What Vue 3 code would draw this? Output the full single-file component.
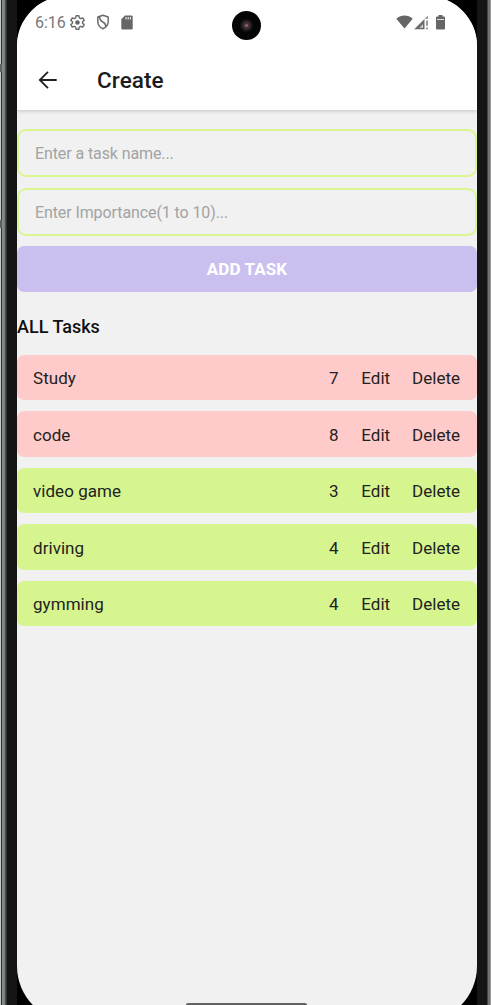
<script setup>
const tasks = [
  { name: 'Study', importance: 7 },
  { name: 'code', importance: 8 },
  { name: 'video game', importance: 3 },
  { name: 'driving', importance: 4 },
  { name: 'gymming', importance: 4 },
]
</script>

<template>
  <div class="phone">
    <i class="side-key upper"></i>
    <i class="side-key lower"></i>
    <div class="glass">
      <main class="screen">
        <header class="top">
          <div class="status">
            <span class="clock">6:16</span>
            <svg class="gear" viewBox="0 0 24 24" width="17" height="17"><path fill="none" stroke="#6b6b6b" stroke-width="2" stroke-linejoin="round" d="M10 2.5h4l.6 3 1.9 1.1 2.9-1 2 3.4-2.3 2v2l2.3 2-2 3.4-2.9-1-1.9 1.1-.6 3h-4l-.6-3-1.9-1.1-2.9 1-2-3.4 2.3-2v-2l-2.3-2 2-3.4 2.9 1 1.9-1.1z"/><circle cx="12" cy="12" r="3.2" fill="#666"/></svg>
            <svg class="shield" viewBox="0 0 14 16" width="14" height="16"><path fill="none" stroke="#6b6b6b" stroke-width="1.5" stroke-linejoin="round" d="M7 1.2 12.2 3v4.5c0 3.500-2.200 6-5.200 7.300-3-1.300-5.200-3.800-5.200-7.300V3zM3.800 2.500c-.5 3 .7 4.200 3 5.500 2.500 1.400 3.400 2.600 2.700 5"/></svg>
            <svg class="card" viewBox="0 0 12 15" width="12" height="15"><path fill="#666" d="M4 .5h6.500q1.200 0 1.200 1.200v11.600q0 1.200-1.200 1.200h-9q-1.200 0-1.200-1.200V4.300z"/><path stroke="#fff" stroke-width="1" d="M5 2v2.500M7.200 2v2.500M9.400 2v2.500"/></svg>
            <span class="spacer"></span>
            <svg class="wifi" viewBox="0 0 17 14" width="17" height="14"><path fill="#666" d="M.3 3.700C5-.5 12-.5 16.700 3.700L8.500 13.600z"/></svg>
            <svg class="signal" viewBox="0 0 15 15" width="15" height="15"><path fill="#6b6b6b" d="M.2 14.300 10.500 4v10.300z"/><path fill="#999" d="m11 3.500 3-3V4h-3z"/><path fill="#d8d8d8" d="M5.500 12.800 9 9.300v3.500z"/><path stroke="#777" stroke-width="1.500" d="M13 5.500v5.200M13 12.500v1.800"/></svg>
            <svg class="battery" viewBox="0 0 9 15" width="9" height="15"><path fill="#666" d="M2.500 0h4v1.500H8q1 0 1 1v11q0 1-1 1H1q-1 0-1-1v-11q0-1 1-1h1.500z"/><path stroke="#ddd" d="M1 4.500h7"/></svg>
            <i class="camera"></i>
          </div>
          <div class="bar">
            <svg viewBox="0 0 20 20" width="20" height="20"><path fill="none" stroke="#202124" stroke-width="1.8" d="M18.700 10H2M10 1.800 1.800 10l8.200 8.200"/></svg>
            <h1>Create</h1>
          </div>
        </header>
        <section class="content">
          <input type="text" placeholder="Enter a task name..." />
          <input type="text" placeholder="Enter Importance(1 to 10)..." />
          <button>ADD TASK</button>
          <h2>ALL Tasks</h2>
          <ul>
            <li v-for="task in tasks" :key="task.name" :class="{ important: task.importance > 5 }">
              <span class="name">{{ task.name }}</span>
              <span class="level">{{ task.importance }}</span>
              <span class="edit">Edit</span>
              <span class="delete">Delete</span>
            </li>
          </ul>
        </section>
      </main>
      <i class="home"></i>
    </div>
  </div>
</template>

<style>
body { overflow: hidden; }
</style>
<style scoped>
* { box-sizing: border-box; }
.phone {
  position: relative;
  height: 1005px;
  overflow: hidden;
  padding: 0 14px 0 17px;
  font-family: Roboto, "Liberation Sans", sans-serif;
  background: linear-gradient(90deg, #c9cbcb 0 1px, #303232 1px 2px, #858989 2px 4px, #777b7b 4px 5px, #4b4e4e 5px 6px, #343636 6px 7px, #151515 7px 487px, #454343 487px 488px, #747070 488px 490px, #999696 490px 491px);
}
.side-key { position: absolute; left: 0; width: 2px; height: 8px; background: #606363; }
.upper { top: 64px; }
.lower { top: 220px; }
.glass { position: relative; height: 1005px; background: linear-gradient(#000 60px, #151515 60px 950px, #000 950px); overflow: hidden; }
.screen { margin-top: -4px; height: 1026px; border-radius: 50px 50px 56px 56px; background: #f1f1f1; overflow: hidden; }
.top { height: 114px; padding-top: 4px; background: #fff; box-shadow: 0 1px 4px #0003; position: relative; }
.status { position: relative; height: 44px; display: flex; align-items: center; padding: 0 32px 0 18px; }
.clock { width: 34px; font-size: 16px; color: #777; }
.shield { margin-left: 9.5px; }
.card { margin-left: 11px; }
.spacer { flex: 1; }
.signal { margin-left: 1px; }
.battery { margin-left: 7px; }
.camera { position: absolute; left: 215px; top: 11px; width: 29px; height: 29px; border-radius: 50%; background: radial-gradient(circle at 50% 50%, #806080 0 1px, #493524 2px, #312038 4px, #191919 5px, #050505 7px); }
.bar { height: 64px; display: flex; align-items: center; padding: 7px 0 0 21px; }
.bar h1 { margin: 1px 0 0 39px; font-size: 22.5px; font-weight: 500; letter-spacing: .1px; line-height: 28px; color: #1c1c1e; }
.content { padding-top: 19px; }
input { display: block; width: 100%; height: 48px; margin: 0 0 11px; padding: 0 16px; border: 2px solid #d9f691; border-radius: 9px; background: transparent; font: 16px Roboto, sans-serif; outline: 0; }
input::placeholder { color: #a3a3a3; opacity: 1; letter-spacing: -.1px; }
button { display: block; width: 100%; height: 46px; margin: -1px 0 0; padding: 0; border: 0; border-radius: 7px; background: #cbbff0; color: #fff; font: 700 17px Roboto, sans-serif; letter-spacing: .1px; }
h2 { margin: 23px 0 16px; font-size: 18px; line-height: 24px; font-weight: 500; color: #111; }
ul { list-style: none; margin: 0; padding: 0; display: grid; gap: 11.3px; }
li { height: 45.2px; padding: 1px 17px 0 16px; display: flex; align-items: center; border-radius: 7px; background: #d7f58e; font-size: 17px; color: #222; }
.important { background: #ffcbca; }
.name { flex: 1; letter-spacing: .05px; }
.edit { margin-left: 22.7px; }
.delete { margin-left: 22px; }
.home { position: absolute; left: 169px; bottom: 0; width: 121px; height: 2px; border-radius: 2px 2px 0 0; background: #626262; }
</style>
